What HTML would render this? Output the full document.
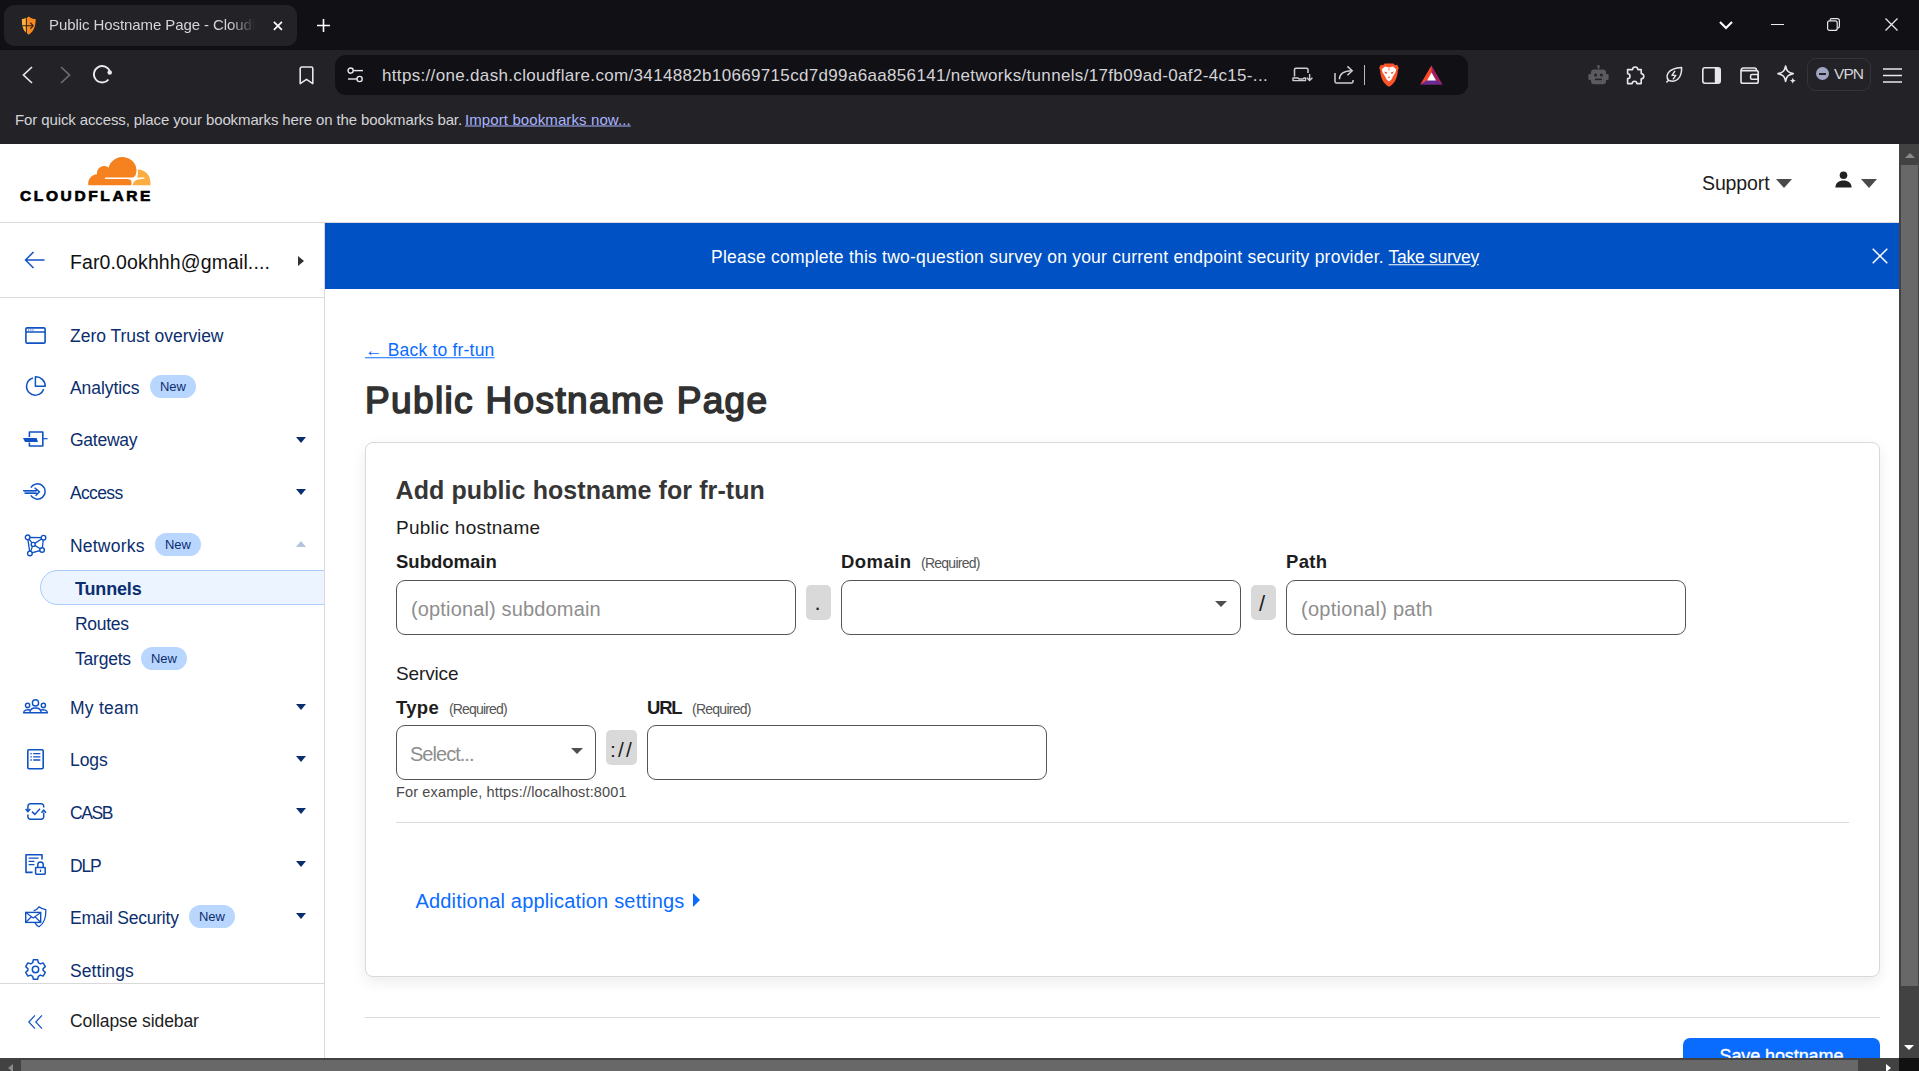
<!DOCTYPE html>
<html lang="en"><head><meta charset="utf-8"><title>Public Hostname Page - Cloudflare One</title>
<style>
*{box-sizing:border-box;margin:0;padding:0}
html,body{width:1919px;height:1071px;overflow:hidden;background:#fff}
body{font-family:"Liberation Sans",sans-serif;position:relative;color:#1d1d1d}
.abs,.t{position:absolute}
.t{white-space:nowrap;line-height:1;transform:translateY(-50%);transform-origin:0 50%}
svg{position:absolute;overflow:visible}
/* browser chrome */
#tabstrip{left:0;top:0;width:1919px;height:50px;background:#111014}
#tab{left:4px;top:5px;width:293px;height:41px;background:#232227;border-radius:10px}
#toolbar{left:0;top:50px;width:1919px;height:94px;background:#232227}
#urlbar{left:335px;top:55px;width:1133px;height:40px;background:#111014;border-radius:11px}
.ct{color:#d4d4d8}
/* page */
#page{left:0;top:144px;width:1899px;height:914px;background:#fff;overflow:hidden}
#vscroll{left:1899px;top:144px;width:20px;height:914px;background:#424242}
#hscroll{left:0;top:1058px;width:1899px;height:13px;background:#424242}
#corner{left:1899px;top:1058px;width:20px;height:13px;background:#111}
.thumb{background:#686868}
#header{left:0;top:144px;width:1899px;height:79px;border-bottom:1px solid #d9d9d9;background:#fff}
#sidebar{left:0;top:223px;width:325px;height:835px;border-right:1px solid #d9d9d9;background:#fff}
.nav{color:#0b2e6e;font-size:17.5px}
.badge{position:absolute;height:23px;width:46px;border-radius:12px;background:#b9d6ff;color:#0b2e6e;font-size:13px;text-align:center;line-height:23px}
.caret{position:absolute;width:0;height:0;border-left:5.5px solid transparent;border-right:5.5px solid transparent;border-top:6px solid #0b2e6e}
#banner{left:325px;top:223px;width:1574px;height:66px;background:#0051c3}
#card{left:365px;top:442px;width:1515px;height:535px;border:1px solid #d9d9d9;border-radius:8px;box-shadow:0 5px 14px rgba(0,0,0,.08);background:#fff}
.inp{position:absolute;height:55px;border:1px solid #555;border-radius:9px;background:#fff}
.sep{position:absolute;height:34.600px;background:#d9d9d9;border-radius:5px}
.lbl{font-weight:bold;font-size:18px;color:#1d1d1d}
.req{font-size:14px;color:#555;letter-spacing:-0.8px}
.ph{font-size:19px;color:#8e8e8e}
</style></head><body>
<!-- ============ BROWSER CHROME ============ -->
<div class="abs" id="tabstrip"></div>
<div class="abs" id="tab"></div>
<div class="abs" id="toolbar"></div>
<div class="abs" id="urlbar"></div>
<!-- tab -->
<svg style="left:20.800px;top:16.300px" width="15.600" height="19.200" viewBox="0 0 20 21" preserveAspectRatio="none"><path d="M10 0.500C7 2.600 4 3.200 1.200 3.400C1 10.500 3.200 17 10 20.500C16.800 17 19 10.500 18.800 3.400C16 3.200 13 2.600 10 0.500Z" fill="#f8891f"/><path d="M6.900 2.300C5 3 3 3.300 1.200 3.400C1 10.500 2.600 15.600 6.900 18.700Z" fill="#fbb040"/><path d="M1.400 10.700H15M6.900 2.400V18.600" stroke="#2a2118" stroke-width="1.300" fill="none"/><path d="M12 7.400L15.600 10.700L12 14" stroke="#2a2118" stroke-width="1.400" fill="none"/></svg>
<div class="t ct" id="tabtitle" style="left:49px;top:25.200px;font-size:15px;line-height:22px;letter-spacing:-0.08px;width:212px;overflow:hidden;-webkit-mask-image:linear-gradient(90deg,#000 181px,transparent 206px);mask-image:linear-gradient(90deg,#000 181px,transparent 206px)">Public Hostname Page - Cloudflare One</div>
<svg style="left:272.500px;top:21px" width="9.800" height="9.800" viewBox="0 0 11 11"><path d="M1 1L10 10M10 1L1 10" stroke="#fff" stroke-width="1.9" fill="none"/></svg>
<svg style="left:317px;top:19px" width="13" height="13" viewBox="0 0 13 13"><path d="M6.5 0V13M0 6.5H13" stroke="#fff" stroke-width="1.6" fill="none"/></svg>
<!-- window controls -->
<svg style="left:1719px;top:21px" width="14" height="8" viewBox="0 0 14 8"><path d="M1 1L7 7L13 1" stroke="#fff" stroke-width="2.100" fill="none"/></svg>
<div class="abs" style="left:1771px;top:24px;width:13px;height:1px;background:#ececec"></div>
<svg style="left:1827px;top:18px" width="13" height="13" viewBox="0 0 13 13"><rect x="0.6" y="2.8" width="9.6" height="9.6" rx="2" stroke="#e8e8ea" stroke-width="1.2" fill="none"/><path d="M3 2.6V2.4A1.8 1.8 0 0 1 4.8 0.6H10.4A2 2 0 0 1 12.4 2.6V8.2A1.8 1.8 0 0 1 10.6 10H10.4" stroke="#e8e8ea" stroke-width="1.2" fill="none"/></svg>
<svg style="left:1885px;top:18px" width="13" height="13" viewBox="0 0 13 13"><path d="M0.5 0.5L12.5 12.5M12.5 0.5L0.5 12.5" stroke="#e8e8ea" stroke-width="1.3" fill="none"/></svg>
<!-- nav buttons -->
<svg style="left:22px;top:66px" width="11" height="18" viewBox="0 0 11 18"><path d="M10 1L1.5 9L10 17" stroke="#e8e8ea" stroke-width="1.7" fill="none"/></svg>
<svg style="left:60px;top:66px" width="11" height="18" viewBox="0 0 11 18"><path d="M1 1L9.5 9L1 17" stroke="#6d6c72" stroke-width="1.7" fill="none"/></svg>
<svg style="left:92.300px;top:64.300px" width="21.600" height="20.500" viewBox="0 0 20 19"><path d="M16.6 7.2A7.6 7.6 0 1 0 15.2 14.4" stroke="#e8e8ea" stroke-width="1.7" fill="none"/><circle cx="16.4" cy="7.8" r="2.1" fill="#e8e8ea"/></svg>
<svg style="left:299px;top:66px" width="15" height="19" viewBox="0 0 15 19"><path d="M1.2 17.6V2.6A1.6 1.6 0 0 1 2.8 1H12.2A1.6 1.6 0 0 1 13.8 2.6V17.6L7.5 13.4Z" stroke="#e8e8ea" stroke-width="1.6" fill="none" stroke-linejoin="round"/></svg>
<svg style="left:347px;top:67px" width="17" height="16" viewBox="0 0 17 16"><circle cx="3.6" cy="3.6" r="2.6" stroke="#e8e8ea" stroke-width="1.4" fill="none"/><path d="M6.5 3.6H16" stroke="#e8e8ea" stroke-width="1.4"/><circle cx="12.6" cy="12" r="2.6" stroke="#e8e8ea" stroke-width="1.4" fill="none"/><path d="M1 12H10" stroke="#e8e8ea" stroke-width="1.4"/></svg>
<div class="t ct" id="url" style="left:382px;top:74.50px;font-size:17px;letter-spacing:0.331px">https://one.dash.cloudflare.com/3414882b10669715cd7d99a6aa856141/networks/tunnels/17fb09ad-0af2-4c15-...</div>
<!-- url bar right icons -->
<svg style="left:1292px;top:67px" width="21" height="16" viewBox="0 0 21 16"><path d="M2.5 9.5V2.6A1.4 1.4 0 0 1 3.9 1.2H14.6A1.4 1.4 0 0 1 16 2.6V6" stroke="#cfcfd3" stroke-width="1.5" fill="none"/><path d="M1 11H6L7 12H11L12 11H13.5V13.6H1Z" stroke="#cfcfd3" stroke-width="1.4" fill="none" stroke-linejoin="round"/><path d="M17.6 7V13.4M14.8 10.8L17.6 13.6L20.4 10.8" stroke="#cfcfd3" stroke-width="1.4" fill="none"/></svg>
<svg style="left:1334px;top:65px" width="20" height="19" viewBox="0 0 20 19"><path d="M1 8V16.4A1.6 1.6 0 0 0 2.6 18H17.4A1.6 1.6 0 0 0 19 16.400V15" stroke="#cfcfd3" stroke-width="1.5" fill="none"/><path d="M5.4 14.2C5.6 9.4 9 6 17.6 5.800" stroke="#cfcfd3" stroke-width="1.5" fill="none"/><path d="M13.4 1.400L18.2 5.800L13.4 10.200" stroke="#cfcfd3" stroke-width="1.5" fill="none"/></svg>
<div class="abs" style="left:1364px;top:65px;width:1.200px;height:20px;background:#b9b9be"></div>
<svg style="left:1379px;top:63px" width="20" height="24" viewBox="0 0 20 24"><path d="M10 0.400 L14.400 0.400 L16 2.200 L18.200 1.800 L19.800 5 L18.800 7.400 C19 10 17.800 15 15.800 18.400 C14 21 12 22.600 10 23.800 C8 22.600 6 21 4.200 18.400 C2.200 15 1 10 1.200 7.400 L0.200 5 L1.800 1.800 L4 2.200 L5.600 0.400 Z" fill="#fb542b"/><path d="M2.800 6.200L6 3.600L10 4.600L14 3.600L17.200 6.200L16.400 9.600L14 13.200L12.200 16.800L10 18.400L7.800 16.800L6 13.200L3.600 9.600Z" fill="#fff"/><path d="M5 8.600L8.400 9.400L7 11.200ZM15 8.600L11.600 9.400L13 11.200ZM8.800 13.800H11.200L10 15.400ZM9.300 5.400H10.700L10 8.200Z" fill="#fb542b"/></svg>
<svg style="left:1420px;top:65px" width="23" height="20" viewBox="0 0 23 20"><path d="M11.500 0.400L22.600 19.600H0.400Z" fill="#9e1f63"/><path d="M11.500 0.400L11.500 12.600 L0.400 19.600Z" fill="#ff4724"/><path d="M0.400 19.600L11.500 12.600L22.600 19.600Z" fill="#662d91"/><path d="M11.500 7.600L16 15.400H7Z" fill="#fff"/></svg>
<!-- toolbar right icons -->
<svg style="left:1588px;top:65px" width="21" height="20" viewBox="0 0 21 20"><path d="M10.500 0V4" stroke="#5b5a5f" stroke-width="1.4"/><circle cx="10.500" cy="1.600" r="1.300" fill="#5b5a5f"/><rect x="3" y="4.400" width="15" height="14.800" rx="3" fill="#5b5a5f"/><rect x="0.400" y="9" width="3" height="6" rx="1.200" fill="#5b5a5f"/><rect x="17.600" y="9" width="3" height="6" rx="1.200" fill="#5b5a5f"/><circle cx="7.600" cy="10" r="1.500" fill="#232227"/><circle cx="13.400" cy="10" r="1.500" fill="#232227"/><path d="M7 14.400H14" stroke="#232227" stroke-width="1.500"/></svg>
<svg style="left:1626px;top:66px" width="19" height="19" viewBox="0 0 19 19"><path d="M6.600 3.600A2.600 2.600 0 0 1 11.800 3.600H15.200V7.600A2.600 2.600 0 0 1 15.200 12.800V17.600H10.800A2.300 2.300 0 0 0 6.200 17.600H1.600V12.600A2.400 2.400 0 0 0 1.600 7.800V3.600Z" stroke="#e8e8ea" stroke-width="1.600" fill="none" stroke-linejoin="round"/></svg>
<svg style="left:1665px;top:66px" width="18" height="18" viewBox="0 0 18 18"><path d="M3.400 14.200C0.400 10 2 2.400 16.600 1.400C17 12 11 17.600 3.400 14.200ZM3.800 14L1.400 16.600" stroke="#e8e8ea" stroke-width="1.500" fill="none" stroke-linejoin="round"/><path d="M10 4.800L7 9.400H10.800L8 13.400" stroke="#e8e8ea" stroke-width="1.400" fill="none" stroke-linejoin="round"/></svg>
<svg style="left:1702px;top:67px" width="19" height="17" viewBox="0 0 19 17"><rect x="0.800" y="0.800" width="17.400" height="15.400" rx="2.200" stroke="#e8e8ea" stroke-width="1.600" fill="none"/><path d="M12.800 1H16A2 2 0 0 1 18 3V14A2 2 0 0 1 16 16H12.800Z" fill="#e8e8ea"/></svg>
<svg style="left:1740px;top:67px" width="19" height="17" viewBox="0 0 19 17"><path d="M1 3.600V14.400A1.800 1.800 0 0 0 2.800 16.200H16.400A1.800 1.800 0 0 0 18.200 14.400V5.400A1.800 1.800 0 0 0 16.400 3.600H1A2.400 2.400 0 0 1 3.400 1H14.600A1.800 1.800 0 0 1 16.400 2.800V3.600" stroke="#e8e8ea" stroke-width="1.600" fill="none" stroke-linejoin="round"/><rect x="10.600" y="7.600" width="7.600" height="4.600" rx="1.200" stroke="#e8e8ea" stroke-width="1.500" fill="none"/></svg>
<svg style="left:1777px;top:65px" width="20" height="20" viewBox="0 0 20 20"><path d="M8.600 1C9.600 6 11 7.400 16.200 8.600C11 9.800 9.600 11.200 8.600 16.400C7.600 11.200 6.200 9.800 1 8.600C6.200 7.400 7.600 6 8.600 1Z" stroke="#e8e8ea" stroke-width="1.600" fill="none" stroke-linejoin="round"/><path d="M15.800 12.600C16.200 14.800 16.800 15.400 19 15.800C16.800 16.200 16.200 16.800 15.800 19C15.400 16.800 14.800 16.200 12.600 15.800C14.800 15.400 15.400 14.800 15.800 12.600Z" fill="#e8e8ea"/></svg>
<div class="abs" style="left:1807px;top:58px;width:64px;height:33px;border:1px solid #35343a;border-radius:9px"></div>
<div class="abs" style="left:1816px;top:67px;width:13px;height:13px;border-radius:50%;background:#a0a5c4"></div>
<div class="abs" style="left:1819px;top:72.500px;width:7px;height:2px;background:#232227"></div>
<div class="t ct" id="vpn" style="left:1834px;top:74px;font-size:15.5px;letter-spacing:-0.958px">VPN</div>
<svg style="left:1883px;top:68px" width="19" height="15" viewBox="0 0 19 15"><path d="M0 1H19M0 7.500H19M0 14H19" stroke="#e8e8ea" stroke-width="1.600"/></svg>
<!-- bookmarks bar -->
<div class="t ct" id="bm1" style="left:15px;top:118.50px;font-size:15px;letter-spacing:-0.114px">For quick access, place your bookmarks here on the bookmarks bar.</div>
<div class="t" id="bm2" style="left:465px;top:118.50px;font-size:15px;color:#a9b4ff;text-decoration:underline;letter-spacing:0.102px">Import bookmarks now...</div>
<!--CHROME-ITEMS-->
<!-- ============ PAGE ============ -->
<div class="abs" id="page"></div>
<div class="abs" id="header"></div>
<div class="abs" id="sidebar"></div>
<div class="abs" id="banner"></div>
<div class="abs" id="card"></div>
<svg style="left:88.300px;top:157px" width="62.500" height="28.400" viewBox="0 0 62.500 28.400"><path d="M0.300 28.300C-0.500 22.500 3.500 17.600 9 17.300C8.300 12 13 7.800 18 9.300C19 9.600 19.800 10.100 20.400 10.800C22.500 4.200 28 0 34 0C42 0 48.500 6 48.500 13C48.500 15 48.100 17 47.200 18.800C46.500 20 45.200 20.600 43.700 20.600L17.500 20.600C16.600 20.600 16.600 22 17.500 22L39.500 22C43 22 44.600 25 43.100 28.300Z" fill="#f6821f"/><path d="M49.600 12.500C57 12.500 62.500 18.200 62.500 25.800L62.500 28.300L44.600 28.300C45 25.200 47 23 50 22.400L56 21.700C57 21.500 57 20.400 56 20.400L49 20.400C50 18 50.400 15 49.600 12.500Z" fill="#fbad41"/></svg>
<div class="t" id="logotext" style="-webkit-text-stroke:0.7px #000;left:20px;top:196px;font-size:15.5px;font-weight:bold;color:#000;letter-spacing:2.622px">CLOUDFLARE</div>
<div class="t" id="support" style="left:1702px;top:183.75px;font-size:19.5px;color:#1d1d1d;letter-spacing:-0.116px">Support</div>
<div class="caret" style="left:1776px;top:178.500px;border-left-width:8px;border-right-width:8px;border-top:9px solid #4a4a4a"></div>
<svg style="left:1835px;top:171px" width="17" height="17" viewBox="0 0 17 17"><circle cx="8.500" cy="4.200" r="3.800" fill="#222"/><path d="M0.400 16.600C0.400 11.600 4 9.400 8.500 9.400C13 9.400 16.600 11.600 16.600 16.600Z" fill="#222"/></svg>
<div class="caret" style="left:1861px;top:178.500px;border-left-width:8px;border-right-width:8px;border-top:9px solid #4a4a4a"></div>
<svg style="left:24px;top:251px" width="21" height="18" viewBox="0 0 21 18"><path d="M20.500 9H1.500M9.500 1L1.500 9L9.500 17" stroke="#0f52c4" stroke-width="1.500" fill="none"/></svg>
<div class="t" id="acct" style="left:70px;top:262.75px;font-size:19.5px;color:#111;letter-spacing:0.116px">Far0.0okhhh@gmail....</div>
<div class="abs" style="left:298px;top:255.500px;width:0;height:0;border-top:5.500px solid transparent;border-bottom:5.500px solid transparent;border-left:6px solid #313131"></div>
<div class="abs" style="left:0;top:297px;width:324px;height:1px;background:#d9d9d9"></div>
<svg style="left:25px;top:327px" width="21" height="17" viewBox="0 0 21 17"><rect x="0.900" y="0.900" width="19.200" height="15.200" rx="1.200" stroke="#0f52c4" stroke-width="1.600" fill="none"/><path d="M1 5H20" stroke="#0f52c4" stroke-width="1.500"/><path d="M3 3H4.200M5.200 3H6.400M7.400 3H8.600" stroke="#0f52c4" stroke-width="1.200"/></svg>
<svg style="left:26px;top:376px" width="20" height="20" viewBox="0 0 20 20"><path d="M7 2A8.700 8.700 0 1 0 17.600 13" stroke="#0f52c4" stroke-width="1.500" fill="none"/><path d="M9.400 0.800V10.200H19.200A9.400 9.400 0 0 0 9.400 0.800Z" stroke="#0f52c4" stroke-width="1.500" fill="none" stroke-linejoin="round"/></svg>
<svg style="left:23px;top:431px" width="25" height="16" viewBox="0 0 25 16"><path d="M6.400 6V1H19.800V15H6.400V11.600" stroke="#0f52c4" stroke-width="1.600" fill="none" stroke-linejoin="round"/><path d="M0 7H13.600L15 11H2Z" fill="#0f52c4"/><path d="M19.800 7.700H24.600" stroke="#0f52c4" stroke-width="1.200"/></svg>
<svg style="left:23px;top:483px" width="23" height="17" viewBox="0 0 23 17"><path d="M7.800 4.600A7.700 7.700 0 1 1 7.800 12.400" stroke="#0f52c4" stroke-width="1.500" fill="none"/><path d="M0 7.600H14M1.600 10.400H15" stroke="#0f52c4" stroke-width="1.300"/><path d="M0.400 7.600H13L13.600 10.400H2Z" fill="#0f52c4" opacity=".55"/><path d="M11.600 4.800L16.400 8.900L12.600 12.800" stroke="#0f52c4" stroke-width="1.500" fill="none"/></svg>
<svg style="left:24px;top:534px" width="23" height="23" viewBox="0 0 23 23"><path d="M3.600 3.300L19.500 3.700M3.600 3.300L9.200 10.400M3.600 3.300L5.900 19.400M19.500 3.700L9.200 10.400M19.500 3.700L18.100 16M9.200 10.400L18.100 16M9.200 10.400L5.900 19.400M5.900 19.400L18.100 16" stroke="#0f52c4" stroke-width="1.300" fill="none"/><g fill="#fff" stroke="#0f52c4" stroke-width="1.400"><circle cx="3.600" cy="3.300" r="2.300"/><circle cx="19.500" cy="3.700" r="2.300"/><circle cx="9.200" cy="10.400" r="2"/><circle cx="18.100" cy="16" r="2.300"/><circle cx="5.900" cy="19.400" r="2.300"/></g></svg>
<svg style="left:23px;top:699px" width="25" height="15" viewBox="0 0 25 15"><g stroke="#0f52c4" stroke-width="1.400" fill="none"><circle cx="12.500" cy="3.900" r="3.100"/><circle cx="4.600" cy="6.400" r="2.100"/><circle cx="20.400" cy="6.400" r="2.100"/><path d="M6.800 13.800C7 10.600 9.400 9 12.500 9C15.600 9 18 10.600 18.200 13.800Z" stroke-linejoin="round"/><path d="M7 11C4 10.200 0.800 11.200 0.600 13.800H6.800M18 11C21 10.200 24.200 11.200 24.400 13.800H18.200" stroke-linejoin="round"/></g></svg>
<svg style="left:27px;top:749px" width="17" height="21" viewBox="0 0 17 21"><rect x="0.800" y="0.800" width="15.400" height="19.000" rx="1.200" stroke="#0f52c4" stroke-width="1.600" fill="none"/><path d="M6.200 4.600H13.400M6.200 7.800H13.400M6.200 11H13.400" stroke="#0f52c4" stroke-width="1.300"/><path d="M3.400 4.600H4.800M3.400 7.800H4.800M3.400 11H4.800" stroke="#0f52c4" stroke-width="1.300"/></svg>
<svg style="left:25px;top:803px" width="21" height="17" viewBox="0 0 21 17"><path d="M2.900 8V3.200A2.400 2.400 0 0 1 5.300 0.800H16.300A2.400 2.400 0 0 1 18.700 3.200V4.400M18.700 9.400V13.800A2.400 2.400 0 0 1 16.300 16.200H5.300A2.400 2.400 0 0 1 2.900 13.800V11.600" stroke="#0f52c4" stroke-width="1.500" fill="none"/><path d="M0.600 6L2.900 8.600L5.200 6M16.400 9.800L18.700 7.200L21 9.800" stroke="#0f52c4" stroke-width="1.500" fill="none"/><path d="M7 8.600L9.800 11.400L15 5.800" stroke="#0f52c4" stroke-width="1.500" fill="none"/></svg>
<svg style="left:25px;top:854px" width="21" height="21" viewBox="0 0 21 21"><path d="M7.600 18.400H1V0.800H17V5.600" stroke="#0f52c4" stroke-width="1.600" fill="none" stroke-linejoin="round"/><path d="M3.600 4.200H13.600M3.600 7.400H9.400M3.600 10.600H9.400" stroke="#0f52c4" stroke-width="1.200"/><rect x="10.600" y="13.400" width="9.600" height="6.800" rx="0.600" stroke="#0f52c4" stroke-width="1.500" fill="#fff"/><path d="M12.800 13.400V10.600A2.700 2.700 0 0 1 18.200 10.600V13.400" stroke="#0f52c4" stroke-width="1.500" fill="none"/><path d="M15.500 15.600V18" stroke="#0f52c4" stroke-width="1.300"/></svg>
<svg style="left:25px;top:906px" width="22" height="22" viewBox="0 0 22 22"><path d="M8.600 4.800C11 4 12.800 2.600 14 0.800C15.800 2.400 18.400 3.400 20.800 3.600C21.200 11 19 17.400 14 20.800C12.400 19.800 11 18.400 10 16.800" stroke="#0f52c4" stroke-width="1.300" fill="none" stroke-linejoin="round"/><rect x="0.700" y="6.400" width="15" height="10" stroke="#0f52c4" stroke-width="1.400" fill="#fff"/><path d="M0.800 6.600L8.200 12L15.600 6.600M0.800 16.200L6.400 10.800M15.600 16.200L10 10.800" stroke="#0f52c4" stroke-width="1.200" fill="none"/></svg>
<svg style="left:25px;top:959px" width="21" height="21" viewBox="0 0 21 21"><path d="M8.300 0.800H12.700L13.300 3.700L15.300 4.900L18.100 3.900L20.300 7.700L18.100 9.600V11.400L20.300 13.300L18.100 17.100L15.300 16.100L13.300 17.300L12.700 20.200H8.300L7.700 17.300L5.700 16.100L2.900 17.100L0.700 13.300L2.900 11.400V9.600L0.700 7.700L2.900 3.900L5.700 4.900L7.700 3.700Z" stroke="#0f52c4" stroke-width="1.500" fill="none" stroke-linejoin="round"/><circle cx="10.500" cy="10.500" r="3.200" stroke="#0f52c4" stroke-width="1.500" fill="none"/></svg>
<svg style="left:28px;top:1015px" width="15" height="14" viewBox="0 0 15 14"><path d="M7 0.400L0.800 7L7 13.600M14 0.400L7.800 7L14 13.600" stroke="#0f52c4" stroke-width="1.200" fill="none"/></svg>
<div class="t nav" id="n1" style="left:70px;top:336.75px;font-size:17.5px;letter-spacing:-0.008px">Zero Trust overview</div>
<div class="t nav" id="n2" style="left:70px;top:388.75px;font-size:17.5px;letter-spacing:-0.059px">Analytics</div>
<div class="badge" style="left:150px;top:375.0px">New</div>
<div class="t nav" id="n3" style="left:70px;top:440.75px;font-size:17.5px;letter-spacing:-0.266px">Gateway</div>
<div class="caret" style="left:296px;top:437px"></div>
<div class="t nav" id="n4" style="left:70px;top:493.75px;font-size:17.5px;letter-spacing:-0.651px">Access</div>
<div class="caret" style="left:296px;top:489px"></div>
<div class="t nav" id="n5" style="left:70px;top:546.75px;font-size:17.5px;letter-spacing:0.208px">Networks</div>
<div class="badge" style="left:155px;top:533.0px">New</div>
<div class="caret" style="left:296px;top:541px;border-top:none;border-bottom:6px solid #b4c3dd"></div>
<div class="abs" style="left:40px;top:570px;width:300px;height:35px;border:1px solid #a9cbff;border-radius:17.500px;background:#ecf4ff;clip-path:inset(0 16px 0 0)"></div>
<div class="t nav" id="n6" style="left:75px;top:589.00px;font-weight:bold;font-size:18px;letter-spacing:-0.167px">Tunnels</div>
<div class="t nav" id="n7" style="left:75px;top:624.75px;font-size:17.5px;letter-spacing:-0.276px">Routes</div>
<div class="t nav" id="n8" style="left:75px;top:659.75px;font-size:17.5px;letter-spacing:-0.227px">Targets</div>
<div class="badge" style="left:141px;top:647.0px">New</div>
<div class="t nav" id="n9" style="left:70px;top:708.75px;font-size:17.5px;letter-spacing:0.242px">My team</div>
<div class="caret" style="left:296px;top:704px"></div>
<div class="t nav" id="n10" style="left:70px;top:760.75px;font-size:17.5px;letter-spacing:-0.088px">Logs</div>
<div class="caret" style="left:296px;top:756px"></div>
<div class="t nav" id="n11" style="left:70px;top:813.75px;font-size:17.5px;letter-spacing:-1.414px">CASB</div>
<div class="caret" style="left:296px;top:808px"></div>
<div class="t nav" id="n12" style="left:70px;top:866.75px;font-size:17.5px;letter-spacing:-1.182px">DLP</div>
<div class="caret" style="left:296px;top:861px"></div>
<div class="t nav" id="n13" style="left:70px;top:918.75px;font-size:17.5px;letter-spacing:-0.225px">Email Security</div>
<div class="badge" style="left:189px;top:905.0px">New</div>
<div class="caret" style="left:296px;top:913px"></div>
<div class="t nav" id="n14" style="left:70px;top:971.75px;font-size:17.5px;letter-spacing:0.071px">Settings</div>
<div class="abs" style="left:0;top:983px;width:324px;height:1px;background:#d9d9d9"></div>
<div class="t" id="n15" style="left:70px;top:1021.75px;font-size:17.5px;color:#1d1d1d;letter-spacing:-0.097px">Collapse sidebar</div>
<div class="t" id="ban1" style="left:711px;top:257.75px;font-size:17.5px;color:#fff;letter-spacing:0.228px">Please complete this two-question survey on your current endpoint security provider.</div>
<div class="t" id="ban2" style="left:1388.6px;top:257.75px;font-size:17.5px;color:#fff;text-decoration:underline;letter-spacing:-0.280px">Take survey</div>
<svg style="left:1872px;top:248.300px" width="16" height="16" viewBox="0 0 16 16"><path d="M0.700 0.700L15.300 15.300M15.300 0.700L0.700 15.300" stroke="#fff" stroke-width="1.500" fill="none"/></svg>
<div class="t" id="back" style="left:365px;top:350.75px;font-size:17.5px;color:#0a6cff;text-decoration:underline;letter-spacing:0.191px">← Back to fr-tun</div>
<div class="t" id="h1" style="-webkit-text-stroke:1.6px #313131;left:365px;top:399.50px;font-size:37px;font-weight:normal;color:#313131;letter-spacing:1.355px">Public Hostname Page</div>
<div class="t" id="h2" style="left:395.5px;top:489.50px;font-size:25px;font-weight:bold;color:#363636;letter-spacing:0.095px">Add public hostname for fr-tun</div>
<div class="t" id="ph" style="left:396px;top:526.50px;font-size:19px;color:#1d1d1d;letter-spacing:0.255px">Public hostname</div>
<div class="t lbl" id="l1" style="left:396px;top:562.25px;letter-spacing:-0.004px;font-size:18.5px">Subdomain</div>
<div class="t lbl" id="l2" style="left:841px;top:562.25px;letter-spacing:0.443px;font-size:18.5px">Domain</div>
<div class="t req" id="r2" style="left:921px;top:563.00px;letter-spacing:-0.744px;font-size:14px">(Required)</div>
<div class="t lbl" id="l3" style="left:1286px;top:562.25px;letter-spacing:0.352px;font-size:18.5px">Path</div>
<div class="inp" style="left:396px;top:580px;width:400px"></div>
<div class="t ph" id="p1" style="left:411px;top:609.00px;letter-spacing:0.151px;font-size:20px">(optional) subdomain</div>
<div class="sep" style="left:806px;top:585.400px;width:25px"></div><div class="t" style="left:814.500px;top:603px;font-size:22px;color:#1d1d1d">.</div>
<div class="inp" style="left:841px;top:580px;width:400px"></div>
<div class="caret" style="left:1215px;top:601px;border-left-width:6px;border-right-width:6px;border-top:6.500px solid #4f4f4f"></div>
<div class="sep" style="left:1251px;top:585.400px;width:24.600px"></div><div class="t" style="left:1259px;top:604px;font-size:22px;color:#1d1d1d">/</div>
<div class="inp" style="left:1286px;top:580px;width:400px"></div>
<div class="t ph" id="p3" style="left:1301px;top:609.00px;letter-spacing:0.275px;font-size:20px">(optional) path</div>
<div class="t" id="svc" style="left:396px;top:672.50px;font-size:19px;color:#1d1d1d;letter-spacing:-0.137px">Service</div>
<div class="t lbl" id="l4" style="left:396px;top:708.25px;letter-spacing:0.297px;font-size:18.5px">Type</div>
<div class="t req" id="r4" style="left:449px;top:709.00px;letter-spacing:-0.844px;font-size:14px">(Required)</div>
<div class="t lbl" id="l5" style="left:647px;top:708.25px;letter-spacing:-1.177px;font-size:18.5px">URL</div>
<div class="t req" id="r5" style="left:692px;top:709.00px;letter-spacing:-0.744px;font-size:14px">(Required)</div>
<div class="inp" style="left:396px;top:725px;width:200px"></div>
<div class="t ph" id="sel" style="left:410px;top:754.00px;letter-spacing:-0.974px;font-size:20px">Select...</div>
<div class="caret" style="left:571px;top:748px;border-left-width:6px;border-right-width:6px;border-top:6.500px solid #4f4f4f"></div>
<div class="sep" style="left:606px;top:730.300px;width:30.700px"></div><div class="t" id="css" style="left:610px;top:748.500px;font-size:21px;color:#1d1d1d;letter-spacing:2.200px">://</div>
<div class="inp" style="left:647px;top:725px;width:400px"></div>
<div class="t" id="ex" style="left:396px;top:792.25px;font-size:14.5px;color:#4a4a4a;letter-spacing:0.143px">For example, https://localhost:8001</div>
<div class="abs" style="left:396px;top:822px;width:1453px;height:1px;background:#d9d9d9"></div>
<div class="t" id="add" style="left:415.5px;top:901.00px;font-size:20px;color:#0a6cff;letter-spacing:0.177px">Additional application settings</div>
<div class="abs" style="left:693px;top:893.3px;width:0;height:0;border-top:7.100px solid transparent;border-bottom:7.100px solid transparent;border-left:7.800px solid #0a6cff"></div>
<div class="abs" style="left:365px;top:1017px;width:1515px;height:1px;background:#d9d9d9"></div>
<div class="abs" style="left:1683px;top:1038px;width:197px;height:50px;background:#0a6cff;border-radius:7px"></div>
<div class="t" id="save" style="-webkit-text-stroke:0.35px #fff;left:1719.5px;top:1056.00px;font-size:18px;color:#fff;letter-spacing:-0.098px">Save hostname</div>
<!--PAGE-ITEMS-->

<div class="abs" id="vscroll"></div>
<div class="abs" id="hscroll"></div>
<div class="abs" id="corner"></div>
<div class="abs thumb" style="left:1901px;top:165px;width:17px;height:821px"></div>
<div class="abs" style="left:1904.500px;top:153px;width:0;height:0;border-left:5px solid transparent;border-right:5px solid transparent;border-bottom:5px solid #8a8a8a"></div>
<div class="abs" style="left:1904px;top:1045px;width:0;height:0;border-left:5px solid transparent;border-right:5px solid transparent;border-top:5px solid #fff"></div>
<div class="abs thumb" style="left:21px;top:1060px;width:1837px;height:11px"></div>
<div class="abs" style="left:8px;top:1063.500px;width:0;height:0;border-top:4.500px solid transparent;border-bottom:4.500px solid transparent;border-right:5px solid #8a8a8a"></div>
<div class="abs" style="left:1886px;top:1063.500px;width:0;height:0;border-top:4.500px solid transparent;border-bottom:4.500px solid transparent;border-left:5px solid #fff"></div>
</body></html>
